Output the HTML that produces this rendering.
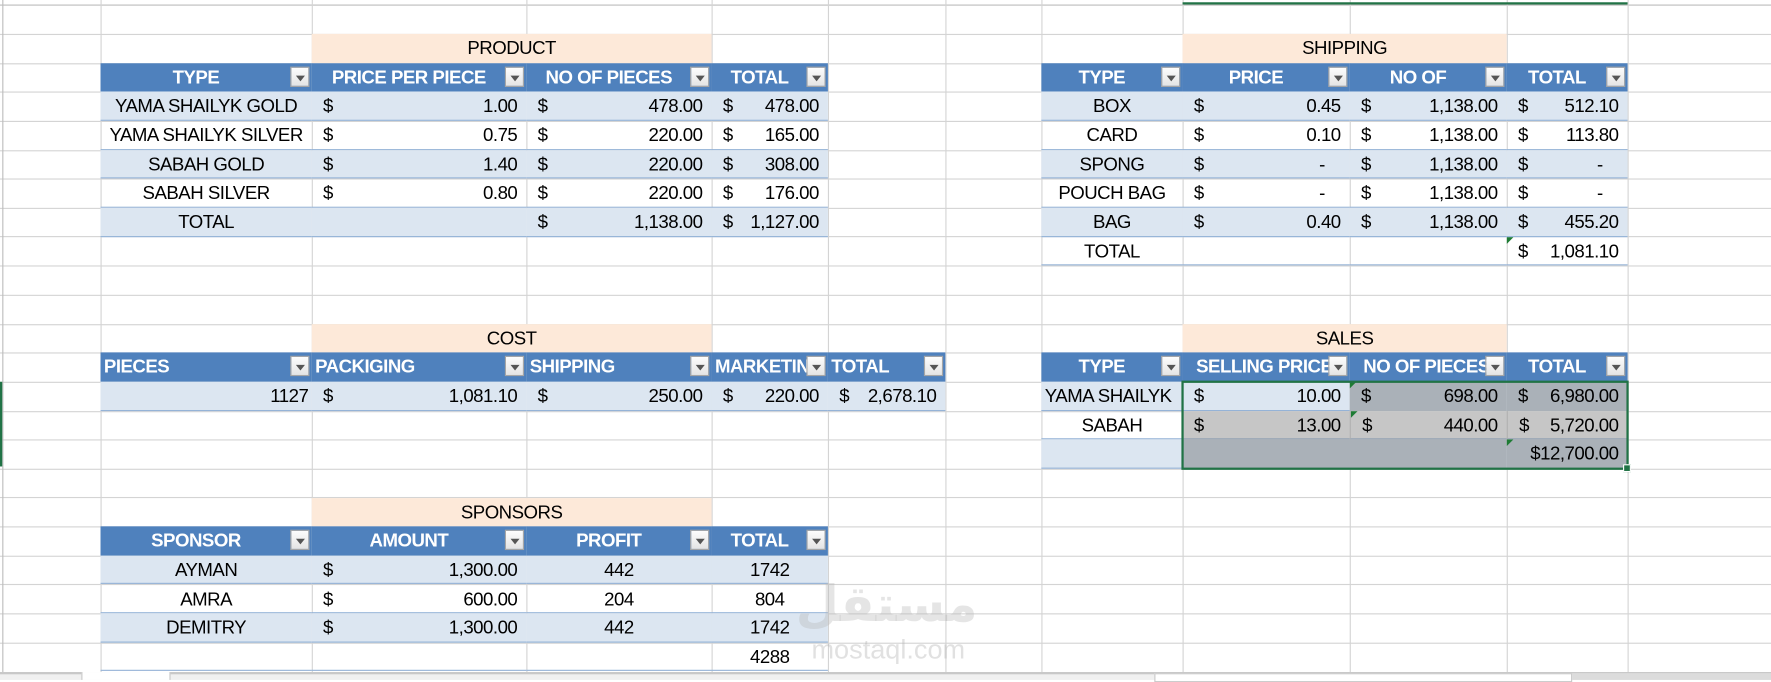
<!DOCTYPE html>
<html><head><meta charset="utf-8">
<style>
html,body{margin:0;padding:0;width:1771px;height:680px;overflow:hidden;background:#fff}
#w{position:absolute;left:0;top:0;width:1568px;height:602px;transform:scale(1.12946);transform-origin:0 0;font-family:"Liberation Sans",sans-serif;font-size:16.5px;letter-spacing:-0.45px;color:#000}
.h{position:absolute;left:0;width:1568px;height:1px;background:#d4d4d4}
.v{position:absolute;top:0;width:1px;height:595px;background:#d4d4d4}
.c{position:absolute;top:calc(4.5px + var(--r)*25.65px);height:25.65px;line-height:27px;box-sizing:border-box;white-space:nowrap;overflow:hidden;text-align:center}
.t{background:#fde9d9}
.hd{background:#4f81bd;color:#fff;font-weight:bold;padding-right:18px}
.hl{text-align:left;padding-left:3px}
.bd{background:#dce6f1;border-bottom:1px solid #95b3d7}
.wt{border-bottom:1px solid #95b3d7}
.m{text-align:right;padding-right:8px}
.d{position:absolute;left:10px}
.b{position:absolute;right:2px;top:3px;width:17px;height:18px;box-sizing:border-box;background:linear-gradient(#fdfdfd,#e4e4e4);border:1px solid #a6a6a6}
.b:after{content:"";position:absolute;left:4px;top:7px;border-left:4px solid transparent;border-right:4px solid transparent;border-top:5px solid #555}
.g1{background:#aab1b8}.g2{background:#c6c6c6}
.tri{position:absolute;left:0;top:0;width:0;height:0;border-top:6px solid #1e7b34;border-right:6px solid transparent}
</style></head><body><div id="w">
<div class="h" style="top:4px;background:#bdbdbd"></div>
<div class="h" style="top:30px"></div><div class="h" style="top:56px"></div><div class="h" style="top:81px"></div><div class="h" style="top:107px"></div><div class="h" style="top:133px"></div><div class="h" style="top:158px"></div><div class="h" style="top:184px"></div><div class="h" style="top:209px"></div><div class="h" style="top:235px"></div><div class="h" style="top:261px"></div><div class="h" style="top:287px"></div><div class="h" style="top:312px"></div><div class="h" style="top:338px"></div><div class="h" style="top:364px"></div><div class="h" style="top:389px"></div><div class="h" style="top:415px"></div><div class="h" style="top:440px"></div><div class="h" style="top:466px"></div><div class="h" style="top:492px"></div><div class="h" style="top:517px"></div><div class="h" style="top:543px"></div><div class="h" style="top:569px"></div>
<div class="v" style="left:2px;background:#bdbdbd"></div>
<div class="v" style="left:89px"></div><div class="v" style="left:276px"></div><div class="v" style="left:466px"></div><div class="v" style="left:630px"></div><div class="v" style="left:733px"></div><div class="v" style="left:837px"></div><div class="v" style="left:922px"></div><div class="v" style="left:1047px"></div><div class="v" style="left:1195px"></div><div class="v" style="left:1334px"></div><div class="v" style="left:1441px"></div>
<div style="position:absolute;left:0;top:338px;width:2px;height:75px;background:#217346"></div>
<div style="position:absolute;left:1047px;top:2px;width:394px;height:2px;background:#217346"></div>

<div class="c t" style="--r:1;left:276px;width:354px">PRODUCT</div>
<div class="c hd" style="--r:2;left:89px;width:187px">TYPE<i class="b"></i></div>
<div class="c hd" style="--r:2;left:276px;width:190px">PRICE PER PIECE<i class="b"></i></div>
<div class="c hd" style="--r:2;left:466px;width:164px">NO OF PIECES<i class="b"></i></div>
<div class="c hd" style="--r:2;left:630px;width:103px">TOTAL<i class="b"></i></div>

<div class="c bd" style="--r:3;left:89px;width:187px">YAMA SHAILYK GOLD</div>
<div class="c bd m" style="--r:3;left:276px;width:190px"><span class="d">$</span>1.00</div>
<div class="c bd m" style="--r:3;left:466px;width:164px"><span class="d">$</span>478.00</div>
<div class="c bd m" style="--r:3;left:630px;width:103px"><span class="d">$</span>478.00</div>
<div class="c wt" style="--r:4;left:89px;width:187px">YAMA SHAILYK SILVER</div>
<div class="c wt m" style="--r:4;left:276px;width:190px"><span class="d">$</span>0.75</div>
<div class="c wt m" style="--r:4;left:466px;width:164px"><span class="d">$</span>220.00</div>
<div class="c wt m" style="--r:4;left:630px;width:103px"><span class="d">$</span>165.00</div>
<div class="c bd" style="--r:5;left:89px;width:187px">SABAH GOLD</div>
<div class="c bd m" style="--r:5;left:276px;width:190px"><span class="d">$</span>1.40</div>
<div class="c bd m" style="--r:5;left:466px;width:164px"><span class="d">$</span>220.00</div>
<div class="c bd m" style="--r:5;left:630px;width:103px"><span class="d">$</span>308.00</div>
<div class="c wt" style="--r:6;left:89px;width:187px">SABAH SILVER</div>
<div class="c wt m" style="--r:6;left:276px;width:190px"><span class="d">$</span>0.80</div>
<div class="c wt m" style="--r:6;left:466px;width:164px"><span class="d">$</span>220.00</div>
<div class="c wt m" style="--r:6;left:630px;width:103px"><span class="d">$</span>176.00</div>
<div class="c bd" style="--r:7;left:89px;width:187px">TOTAL</div>
<div class="c bd" style="--r:7;left:276px;width:190px"></div>
<div class="c bd m" style="--r:7;left:466px;width:164px"><span class="d">$</span>1,138.00</div>
<div class="c bd m" style="--r:7;left:630px;width:103px"><span class="d">$</span>1,127.00</div>

<div class="c t" style="--r:1;left:1047px;width:287px">SHIPPING</div>
<div class="c hd" style="--r:2;left:922px;width:125px">TYPE<i class="b"></i></div>
<div class="c hd" style="--r:2;left:1047px;width:148px">PRICE<i class="b"></i></div>
<div class="c hd" style="--r:2;left:1195px;width:139px">NO OF<i class="b"></i></div>
<div class="c hd" style="--r:2;left:1334px;width:107px">TOTAL<i class="b"></i></div>

<div class="c bd" style="--r:3;left:922px;width:125px">BOX</div>
<div class="c bd m" style="--r:3;left:1047px;width:148px"><span class="d">$</span>0.45</div>
<div class="c bd m" style="--r:3;left:1195px;width:139px"><span class="d">$</span>1,138.00</div>
<div class="c bd m" style="--r:3;left:1334px;width:107px"><span class="d">$</span>512.10</div>
<div class="c wt" style="--r:4;left:922px;width:125px">CARD</div>
<div class="c wt m" style="--r:4;left:1047px;width:148px"><span class="d">$</span>0.10</div>
<div class="c wt m" style="--r:4;left:1195px;width:139px"><span class="d">$</span>1,138.00</div>
<div class="c wt m" style="--r:4;left:1334px;width:107px"><span class="d">$</span>113.80</div>
<div class="c bd" style="--r:5;left:922px;width:125px">SPONG</div>
<div class="c bd m" style="--r:5;left:1047px;width:148px;padding-right:22px"><span class="d">$</span>-</div>
<div class="c bd m" style="--r:5;left:1195px;width:139px"><span class="d">$</span>1,138.00</div>
<div class="c bd m" style="--r:5;left:1334px;width:107px;padding-right:22px"><span class="d">$</span>-</div>
<div class="c wt" style="--r:6;left:922px;width:125px">POUCH BAG</div>
<div class="c wt m" style="--r:6;left:1047px;width:148px;padding-right:22px"><span class="d">$</span>-</div>
<div class="c wt m" style="--r:6;left:1195px;width:139px"><span class="d">$</span>1,138.00</div>
<div class="c wt m" style="--r:6;left:1334px;width:107px;padding-right:22px"><span class="d">$</span>-</div>
<div class="c bd" style="--r:7;left:922px;width:125px">BAG</div>
<div class="c bd m" style="--r:7;left:1047px;width:148px"><span class="d">$</span>0.40</div>
<div class="c bd m" style="--r:7;left:1195px;width:139px"><span class="d">$</span>1,138.00</div>
<div class="c bd m" style="--r:7;left:1334px;width:107px"><span class="d">$</span>455.20</div>
<div class="c wt" style="--r:8;left:922px;width:125px">TOTAL</div>
<div class="c wt" style="--r:8;left:1047px;width:148px"></div>
<div class="c wt" style="--r:8;left:1195px;width:139px"></div>
<div class="c wt m" style="--r:8;left:1334px;width:107px"><i class="tri"></i><span class="d">$</span>1,081.10</div>

<div class="c t" style="--r:11;left:276px;width:354px">COST</div>
<div class="c hd hl" style="--r:12;left:89px;width:187px">PIECES<i class="b"></i></div>
<div class="c hd hl" style="--r:12;left:276px;width:190px">PACKIGING<i class="b"></i></div>
<div class="c hd hl" style="--r:12;left:466px;width:164px">SHIPPING<i class="b"></i></div>
<div class="c hd hl" style="--r:12;left:630px;width:103px">MARKETING<i class="b"></i></div>
<div class="c hd hl" style="--r:12;left:733px;width:104px">TOTAL<i class="b"></i></div>
<div class="c bd m" style="--r:13;left:89px;width:187px;padding-right:3px">1127</div>
<div class="c bd m" style="--r:13;left:276px;width:190px"><span class="d">$</span>1,081.10</div>
<div class="c bd m" style="--r:13;left:466px;width:164px"><span class="d">$</span>250.00</div>
<div class="c bd m" style="--r:13;left:630px;width:103px"><span class="d">$</span>220.00</div>
<div class="c bd m" style="--r:13;left:733px;width:104px"><span class="d">$</span>2,678.10</div>

<div class="c t" style="--r:11;left:1047px;width:287px">SALES</div>
<div class="c hd" style="--r:12;left:922px;width:125px">TYPE<i class="b"></i></div>
<div class="c hd hl" style="--r:12;left:1047px;width:148px;padding-left:12px">SELLING PRICE<i class="b"></i></div>
<div class="c hd hl" style="--r:12;left:1195px;width:139px;padding-left:12px">NO OF PIECES<i class="b"></i></div>
<div class="c hd" style="--r:12;left:1334px;width:107px">TOTAL<i class="b"></i></div>
<div class="c bd" style="--r:13;left:922px;width:125px;text-align:left;padding-left:3px">YAMA SHAILYK</div>
<div class="c bd m" style="--r:13;left:1047px;width:148px"><span class="d">$</span>10.00</div>
<div class="c g1 m" style="--r:13;left:1195px;width:139px"><i class="tri"></i><span class="d">$</span>698.00</div>
<div class="c g1 m" style="--r:13;left:1334px;width:107px"><span class="d">$</span>6,980.00</div>
<div class="c wt" style="--r:14;left:922px;width:125px">SABAH</div>
<div class="c g2 m" style="--r:14;left:1047px;width:148px;border-bottom:1px solid #95a3b3"><span class="d">$</span>13.00</div>
<div class="c g2 m" style="--r:14;left:1195px;width:139px;border-bottom:1px solid #95a3b3;border-left:1px solid #b0b0b0"><i class="tri"></i><span class="d">$</span>440.00</div>
<div class="c g2 m" style="--r:14;left:1334px;width:107px;border-bottom:1px solid #95a3b3;border-left:1px solid #b0b0b0"><span class="d">$</span>5,720.00</div>
<div class="c bd" style="--r:15;left:922px;width:125px"></div>
<div class="c g1" style="--r:15;left:1047px;width:287px"></div>
<div class="c g1 m" style="--r:15;left:1334px;width:107px"><i class="tri"></i>$12,700.00</div>
<div style="position:absolute;left:1046px;top:337px;width:392px;height:75px;border:2px solid #217346"></div>
<div style="position:absolute;left:1437px;top:411px;width:5px;height:5px;background:#217346;border:1px solid #fff"></div>

<div class="c t" style="--r:17;left:276px;width:354px">SPONSORS</div>
<div class="c hd" style="--r:18;left:89px;width:187px">SPONSOR<i class="b"></i></div>
<div class="c hd" style="--r:18;left:276px;width:190px">AMOUNT<i class="b"></i></div>
<div class="c hd" style="--r:18;left:466px;width:164px">PROFIT<i class="b"></i></div>
<div class="c hd" style="--r:18;left:630px;width:103px">TOTAL<i class="b"></i></div>
<div class="c bd" style="--r:19;left:89px;width:187px">AYMAN</div>
<div class="c bd m" style="--r:19;left:276px;width:190px"><span class="d">$</span>1,300.00</div>
<div class="c bd" style="--r:19;left:466px;width:164px">442</div>
<div class="c bd" style="--r:19;left:630px;width:103px">1742</div>
<div class="c wt" style="--r:20;left:89px;width:187px">AMRA</div>
<div class="c wt m" style="--r:20;left:276px;width:190px"><span class="d">$</span>600.00</div>
<div class="c wt" style="--r:20;left:466px;width:164px">204</div>
<div class="c wt" style="--r:20;left:630px;width:103px">804</div>
<div class="c bd" style="--r:21;left:89px;width:187px">DEMITRY</div>
<div class="c bd m" style="--r:21;left:276px;width:190px"><span class="d">$</span>1,300.00</div>
<div class="c bd" style="--r:21;left:466px;width:164px">442</div>
<div class="c bd" style="--r:21;left:630px;width:103px">1742</div>
<div class="c wt" style="--r:22;left:89px;width:187px"></div>
<div class="c wt" style="--r:22;left:276px;width:190px"></div>
<div class="c wt" style="--r:22;left:466px;width:164px"></div>
<div class="c wt" style="--r:22;left:630px;width:103px">4288</div>

<div style="position:absolute;left:700px;top:510px;width:170px;text-align:center;font-family:'DejaVu Sans',sans-serif;font-size:44px;font-weight:bold;color:rgba(180,180,180,0.35);letter-spacing:0">مستقل</div>
<div style="position:absolute;left:704px;top:562px;width:165px;text-align:center;font-size:24px;color:rgba(180,180,180,0.4);letter-spacing:0">mostaql.com</div>

<div style="position:absolute;left:0;top:595px;width:1568px;height:7px;background:#f0f0f0;border-top:2px solid #c8c8c8;box-sizing:border-box"></div>
<div style="position:absolute;left:72px;top:595px;width:77px;height:7px;background:#fff;border-left:1px solid #c8c8c8;border-right:1px solid #c8c8c8"></div>
<div style="position:absolute;left:1022px;top:596px;width:368px;height:6px;background:#fff;border:1px solid #c8c8c8"></div>
<div style="position:absolute;left:1392px;top:596px;width:176px;height:6px;background:#dcdcdc"></div>
</div></body></html>
